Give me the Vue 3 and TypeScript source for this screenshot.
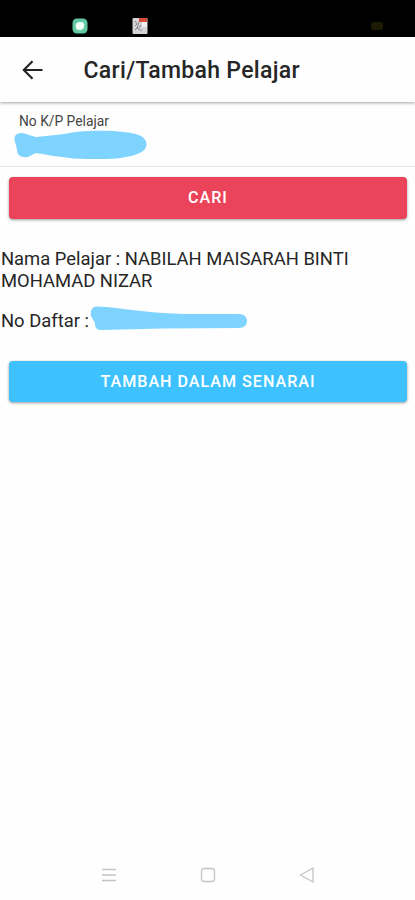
<script setup lang="ts">
import { ref } from "vue";

const student = ref({
	name: "NABILAH MAISARAH BINTI MOHAMAD NIZAR",
});
</script>

<template>
	<div class="screen">
		<div class="status-bar">
			<svg class="status-app" width="16" height="16" viewBox="0 0 16 16">
				<rect x=".5" y=".5" width="15" height="15" rx="4.5" fill="#62c9a4" />
				<path d="M4 5.5 7 4l4 .2 1.3 2.5-.8 3.8-3 1.7-3.8-.8L3.6 9z" fill="#effff6" />
			</svg>
			<svg class="status-news" width="16" height="16" viewBox="0 0 16 16">
				<rect x=".5" width="15" height="16" rx="1" fill="#d5d3d5" />
				<path d="M7 0h8v4H7z" fill="#d84c3c" />
				<path d="M3 3l2 3-2 2M7 4 5 10l5 3M3 12l3-3M9 7l-2 3" stroke="#858588" fill="none" />
				<path d="M10 4h5v5h-5z" fill="#eee" />
			</svg>
			<span class="status-battery"></span>
		</div>

		<header class="toolbar">
			<button class="back" aria-label="Kembali">
				<svg width="22" height="20" viewBox="0 0 22 20" fill="none" stroke="#222" stroke-width="2.1">
					<path d="M20.5 10H2M10.5 1.2 1.8 10l8.7 8.8" />
				</svg>
			</button>
			<h1>Cari/Tambah Pelajar</h1>
		</header>

		<main>
			<div class="item">
				<label>No K/P Pelajar</label>
				<svg class="ic-mark" width="133" height="30" viewBox="0 0 134 30">
					<path d="M1 6C3 3 8 2 12 4l10 3 20-2C54 4 63 1 75 1c23-1 45 1 53 5 7 4 7 11 2 15-6 5-24 8-36 8H72c-15 0-32-3-50-6l-8 4C8 28 3 26 3 20 3 15-1 11 1 6z" fill="#7fd4ff" />
				</svg>
			</div>

			<button class="btn danger">CARI</button>

			<p class="name">Nama Pelajar : {{ student.name }}</p>
			<p class="register">
				<span>No Daftar :</span>
				<svg width="157" height="25" viewBox="0 0 157 25">
					<path d="M6 .5 17 1c25 3 47 6 77 7h55c5 0 8 3 8 7s-3 7-8 7l-76 .5-62 1.5c-5 0-6-3-6-7L1 10C0 5 2 1 6 .5z" fill="#7fd4ff" />
				</svg>
			</p>

			<button class="btn primary">TAMBAH DALAM SENARAI</button>
		</main>

		<nav class="nav-bar">
			<svg width="16" height="16" viewBox="0 0 16 16">
				<path d="M1 2.5h14M1 8h14M1 13.5h14" />
			</svg>
			<svg width="16" height="16" viewBox="0 0 16 16">
				<rect x="1.5" y="1.5" width="13" height="13" rx="2.5" />
			</svg>
			<svg width="16" height="16" viewBox="0 0 16 16">
				<path d="M14 1v14L1.5 8z" stroke-linejoin="round" />
			</svg>
		</nav>
	</div>
</template>

<style>
body {
	margin: 0;
	background: #fefefe;
}
</style>

<style scoped>
.screen {
	display: flex;
	flex-direction: column;
	width: 415px;
	height: 900px;
	overflow: hidden;
	background: #fefefe;
	color: #262626;
	font-family: Roboto, "Liberation Sans", sans-serif;
}

.status-bar {
	display: flex;
	flex-shrink: 0;
	align-items: center;
	box-sizing: border-box;
	height: 37px;
	padding: 15px 32px 0 72px;
	background: #000;
}

.status-news {
	margin-left: 44px;
}

.status-battery {
	width: 12px;
	height: 8px;
	margin-left: auto;
	border-radius: 2px;
	background: #1c1a02;
}

.toolbar {
	display: flex;
	flex-shrink: 0;
	align-items: center;
	height: 65px;
	box-shadow: 0 1px 3px rgba(0, 0, 0, 0.36);
}

.back {
	width: 22px;
	height: 20px;
	margin: 0 0 0 22px;
	padding: 0;
	border: 0;
	background: none;
}

.back svg {
	display: block;
}

h1 {
	margin: 2px 0 0 39.5px;
	font-size: 23px;
	font-weight: 500;
	line-height: 28px;
	letter-spacing: 0.31px;
	white-space: nowrap;
}

main {
	flex: 1;
}

.item {
	box-sizing: border-box;
	height: 65px;
	padding: 10px 0 0 14px;
	border-bottom: 1px solid #e6e6e6;
}

label {
	display: block;
	margin-left: 5px;
	color: #444;
	font-size: 13.8px;
	line-height: 18px;
}

.ic-mark {
	display: block;
}

.btn {
	display: block;
	width: 398px;
	height: 41.6px;
	margin: 0 0 0 9px;
	padding: 0;
	border: 0;
	border-radius: 4px;
	color: #fff;
	font: 500 16.1px/41px Roboto, "Liberation Sans", sans-serif;
	letter-spacing: 1px;
	box-shadow: 0 1px 3px rgba(0, 0, 0, 0.4);
}

.danger {
	margin-top: 10px;
	background: #eb445a;
}

.primary {
	margin-top: 29.7px;
	background: #3dc2ff;
}

p {
	margin: 0;
	font-size: 18.4px;
	line-height: 22px;
}

.name {
	width: 400px;
	margin: 29.4px 0 0 1px;
}

.register {
	display: flex;
	height: 25px;
	margin: 14px 0 0 1px;
}

.register span {
	width: 89px;
	padding-top: 4px;
}

.nav-bar {
	display: flex;
	flex-shrink: 0;
	justify-content: center;
	gap: 83px;
	height: 33px;
}

.nav-bar svg {
	fill: none;
	stroke: #c4c4c4;
	stroke-width: 1.3;
}
</style>
